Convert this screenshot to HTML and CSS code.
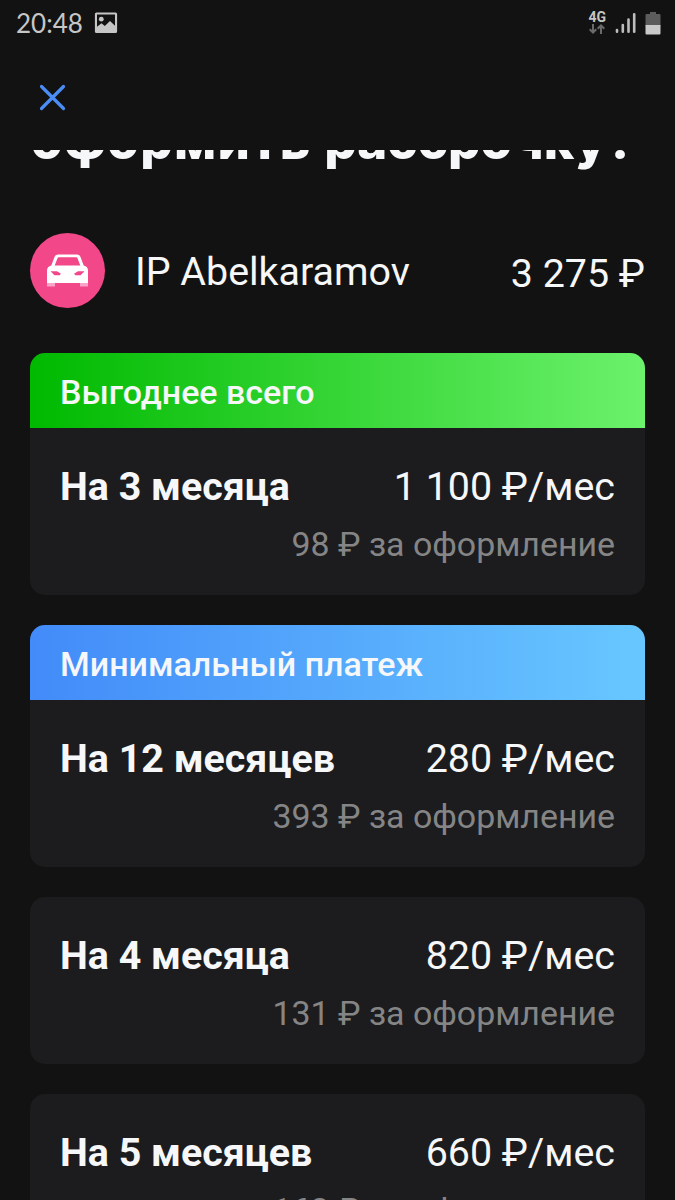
FILE: index.html
```html
<!DOCTYPE html>
<html lang="ru">
<head>
    <meta charset="UTF-8">
    <meta name="viewport" content="width=device-width, initial-scale=1.0">
    <title>Рассрочка</title>
    <link rel="stylesheet" href="styles.css">
</head>
<body>
    <div class="status-bar">
        <span class="time">20:48</span>
        <svg class="picture-icon" width="24" height="22" viewBox="0 0 24 22">
            <path fill="#c6c6c6" fill-rule="evenodd" d="M2.5 .5h19a1.6 1.6 0 0 1 1.6 1.6v17.300a1.600 1.600 0 0 1-1.600 1.600h-19a1.600 1.600 0 0 1-1.600-1.600V2.100A1.600 1.600 0 0 1 2.500 .5zM3 2.600v12.200l4.500-3.600 3.300 2.900 5.200-5 5 4.700V2.600z"/>
            <circle cx="7.300" cy="7.200" r="2.400" fill="#c6c6c6"/>
        </svg>
        <div class="status-right">
            <div class="network">
                <span>4G</span>
                <svg width="16" height="10" viewBox="0 0 16 10" fill="none" stroke="#6a6a6a" stroke-width="2">
                    <path d="M4 0v8.500M.7 5.200L4 8.500l3.300-3.300M12 10V1.500M8.700 4.800L12 1.500l3.300 3.300"/>
                </svg>
            </div>
            <svg class="signal" width="22" height="22" viewBox="0 0 22 22" stroke="#bdbdbd" stroke-width="2.600" stroke-linecap="round">
                <path d="M2 18v1.700M7.800 13v6.700M13.500 7.500v12.200M19.200 2.300v17.400"/>
            </svg>
            <svg class="battery" width="16" height="24" viewBox="0 0 16 24">
                <path fill="#5c5c5c" d="M5 1h6v2h3.500q1 0 1 1v11H.5V4q0-1 1-1H5z"/>
                <path fill="#c9c9c9" d="M.5 14h15v8.500q0 1-1 1h-13q-1 0-1-1z"/>
            </svg>
        </div>
    </div>

    <div class="toolbar">
        <svg width="27" height="27" viewBox="0 0 27 27" stroke="#4a8df5" stroke-width="3.200" stroke-linecap="round">
            <path d="M2.500 2.500l22 22M24.500 2.500l-22 22"/>
        </svg>
    </div>

    <div class="content">
        <div class="title-wrap">
            <h1><span>оформить </span>рассрочку?</h1>
        </div>

        <div class="purchase">
            <div class="avatar">
                <svg width="43" height="34" viewBox="0 0 43 34">
                    <path fill="#f9a3c8" d="M1 28h8v4.500H1zM34 28h8v4.500h-8z"/>
                    <path fill="#fff" fill-rule="evenodd" d="M12 .5h19q2.500 0 3.400 2.300l3.300 8.700q4.300 1.200 4.300 5V29H1V16.500q0-3.800 4.300-5L8.600 2.800Q9.500 .5 12 .5zM12.800 3.300q-1 0-1.300 1L8.700 11.500h25.600l-2.800-7.200q-.3-1-1.300-1zM4.500 17.200h6.500l4 2.500-1.500 1.500H8.500zM38.500 17.200H32l-4 2.500 1.500 1.500h5z"/>
                </svg>
            </div>
            <span class="shop">IP Abelkaramov</span>
            <span class="price">3 275 ₽</span>
        </div>

        <div class="card">
            <div class="card-header green">Выгоднее всего</div>
            <div class="card-body">
                <div class="row"><b>На 3 месяца</b><span>1 100 ₽/мес</span></div>
                <div class="fee">98 ₽ за оформление</div>
            </div>
        </div>

        <div class="card">
            <div class="card-header blue">Минимальный платеж</div>
            <div class="card-body">
                <div class="row"><b>На 12 месяцев</b><span>280 ₽/мес</span></div>
                <div class="fee">393 ₽ за оформление</div>
            </div>
        </div>

        <div class="card">
            <div class="card-body">
                <div class="row"><b>На 4 месяца</b><span>820 ₽/мес</span></div>
                <div class="fee">131 ₽ за оформление</div>
            </div>
        </div>

        <div class="card">
            <div class="card-body">
                <div class="row"><b>На 5 месяцев</b><span>660 ₽/мес</span></div>
                <div class="fee">163 ₽ за оформление</div>
            </div>
        </div>
    </div>
</body>
</html>
```
FILE: styles.css
```css
* {
    box-sizing: border-box;
}

body {
    margin: 0;
    height: 1200px;
    overflow: hidden;
    background-color: #121212;
    color: #f6f7f8;
    font-family: Roboto, sans-serif;
    font-size: 39.4px;
}

.status-bar {
    display: flex;
    align-items: center;
    height: 45px;
    padding: 0 14px 0 16px;
}

.time {
    width: 65px;
    font-family: Lato, sans-serif;
    font-size: 26px;
    color: #c6c6c6;
}

.picture-icon {
    margin-left: 13px;
}

.status-right {
    display: flex;
    align-items: center;
    margin-left: auto;
}

.network {
    display: flex;
    flex-direction: column;
    align-items: center;
    margin-right: 9px;
    font-size: 14px;
    font-weight: bold;
    line-height: 13px;
    color: #c6c6c6;
}

.signal {
    margin-right: 8px;
}

.toolbar {
    display: flex;
    align-items: center;
    height: 105px;
    padding-left: 39px;
}

.content {
    padding: 0 30px;
}

/* the title is scrolled under the toolbar */
.title-wrap {
    display: flex;
    align-items: flex-end;
    height: 30px;
    overflow: hidden;
}

h1 {
    margin: 0;
    padding-left: 1px;
    font-family: Inter, sans-serif;
    font-size: 51px;
    font-weight: 800;
    line-height: 79px;
    white-space: nowrap;
}

h1 span {
    letter-spacing: 1.3px;
}

.purchase {
    display: flex;
    align-items: center;
    height: 75px;
    margin: 53px 0 45px;
}

.avatar {
    display: flex;
    align-items: center;
    justify-content: center;
    width: 75px;
    height: 75px;
    margin-right: 30px;
    border-radius: 50%;
    background-color: #f24789;
}

.shop {
    padding-top: 2px;
}

.price {
    margin-left: auto;
    padding-top: 5px;
}

.card {
    margin-bottom: 30px;
    border-radius: 15px;
    background-color: #1c1c1e;
    overflow: hidden;
}

.card-header {
    height: 75px;
    padding-left: 30px;
    font-size: 34px;
    font-weight: 500;
    line-height: 79px;
}

.green {
    background: linear-gradient(to right, #00b900, #6cf26c);
}

.blue {
    background: linear-gradient(to right, #428bf9, #68c7ff);
}

.card-body {
    height: 167px;
    padding: 30px 30px 0;
    line-height: 58px;
}

.row {
    display: flex;
    justify-content: space-between;
}

.fee {
    font-size: 33.9px;
    color: #858586;
    text-align: right;
}
```
